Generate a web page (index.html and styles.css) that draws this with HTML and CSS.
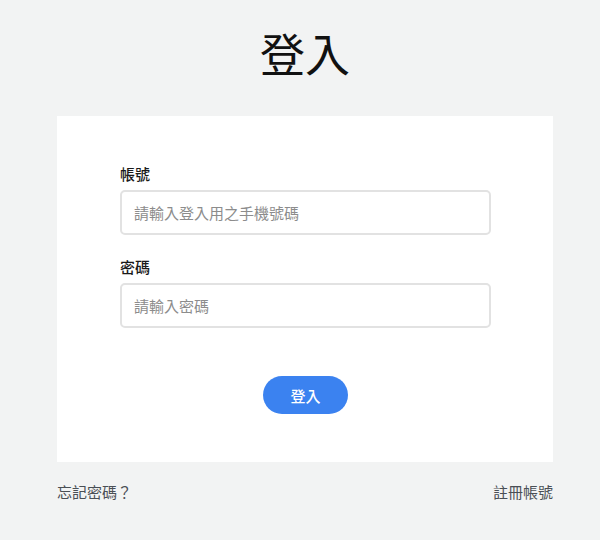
FILE: index.html
```html
<!DOCTYPE html>
<html lang="zh-Hant">
<head>
<meta charset="utf-8">
<title>登入</title>
<link rel="stylesheet" href="styles.css">
</head>
<body>
<div class="page">
  <h1 class="title">登入</h1>
  <form class="card">
    <div class="field">
      <label class="label" for="account">帳號</label>
      <input class="input" id="account" type="text" placeholder="請輸入登入用之手機號碼">
    </div>
    <div class="field">
      <label class="label" for="password">密碼</label>
      <input class="input" id="password" type="password" placeholder="請輸入密碼">
    </div>
    <div class="actions">
      <button class="btn" type="button">登入</button>
    </div>
  </form>
  <div class="footer">
    <a class="link" href="#">忘記密碼？</a>
    <a class="link" href="#">註冊帳號</a>
  </div>
</div>
</body>
</html>
```

FILE: styles.css
```css
* { box-sizing: border-box; }
html, body {
  margin: 0;
  padding: 0;
  background: #f2f3f3;
  font-family: "Noto Sans CJK TC", "Noto Sans", sans-serif;
}
.page {
  width: 496px;
  margin: 0 47px 0 57px;
  padding-top: 30px;
}
.title {
  margin: 0 0 41px;
  font-size: 45px;
  line-height: 45px;
  font-weight: 400;
  text-align: center;
  color: #111;
}
.card {
  background: #fff;
  padding: 47px 62px 48px 63px;
  display: flex;
  flex-direction: column;
}
.field {
  display: flex;
  flex-direction: column;
  margin-bottom: 21px;
}
.field + .field { margin-bottom: 0; }
.label {
  font-size: 15px;
  line-height: 22px;
  font-weight: 500;
  color: #1a1a1a;
  margin-bottom: 5px;
}
.input {
  height: 45px;
  border: 2px solid #e2e2e2;
  border-radius: 5px;
  padding: 0 12px;
  font-family: inherit;
  font-size: 15px;
  color: #222;
  background: #fff;
  outline: none;
}
.input::placeholder { color: #8c8c8c; }
.actions {
  display: flex;
  justify-content: center;
  margin-top: 48px;
}
.btn {
  width: 85px;
  height: 38px;
  border: none;
  border-radius: 19px;
  background: #3b82f0;
  color: #fff;
  font-family: inherit;
  font-size: 15px;
  font-weight: 500;
  cursor: pointer;
}
.footer {
  display: flex;
  justify-content: space-between;
  margin-top: 19px;
}
.link {
  font-size: 15px;
  line-height: 22px;
  color: #4a4f55;
  text-decoration: none;
}
```
